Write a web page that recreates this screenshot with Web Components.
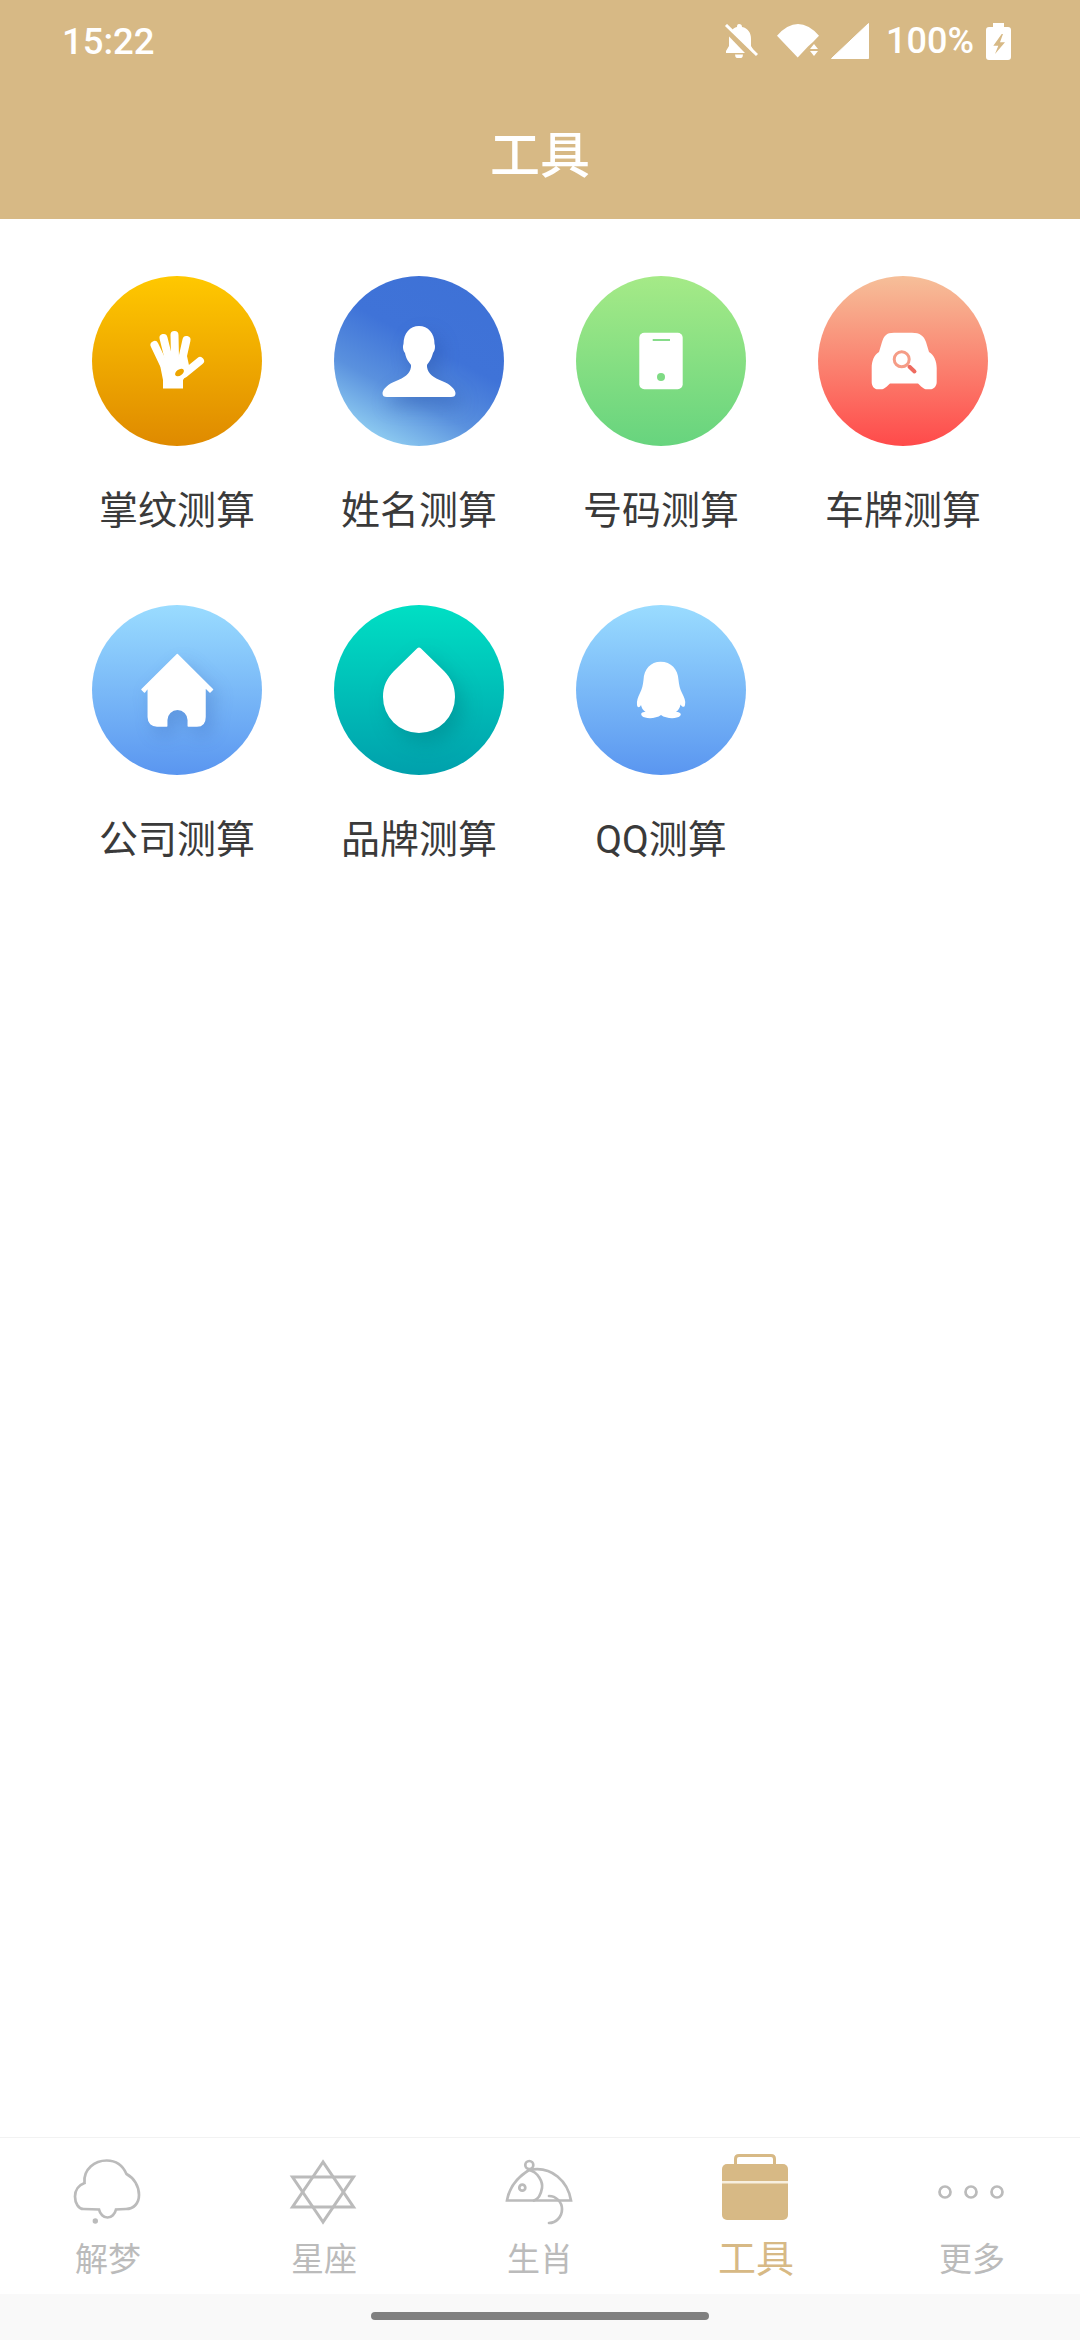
<!DOCTYPE html>
<html lang="zh">
<head>
<meta charset="utf-8">
<title>工具</title>
<style>
  html, body { margin: 0; padding: 0; background: #fff; }
  body { width: 1080px; height: 2340px; display: flex; flex-direction: column; overflow: hidden; }
</style>
</head>
<body>
<app-header title="工具"></app-header>

<tool-grid>
  <tool-item bg="linear-gradient(180deg,#ffc800,#df8a00)">
    <svg slot="icon" viewBox="0 0 170 170" width="170" height="170">
      <g stroke="#fff" stroke-width="8" stroke-linecap="round" fill="none">
        <path d="M62.5 69 71.5 88"/><path d="M71.5 62 77 84"/><path d="M82.5 59 83 82"/><path d="M94.5 64 90 84"/><path d="M108 85 92 98"/>
      </g>
      <path d="M67 84 95 80 98 94 91 104V112.500H71V104Z" fill="#fff"/>
      <ellipse cx="87.500" cy="96.500" rx="5" ry="3" transform="rotate(-35 87.500 96.500)" fill="#eda500"/>
    </svg>
    掌纹测算
  </tool-item>
  <tool-item bg="linear-gradient(208deg,#3e71d6 0%,#3f73d8 42%,#5a91de 66%,#92d0f2 90%)">
    <svg slot="icon" viewBox="0 0 170 170" width="170" height="170" style="filter:drop-shadow(6px 9px 9px rgba(30,70,150,.3))">
      <path fill="#fff" d="M85 50C94 50 100.500 57 100.500 68C101.500 70 101 75 99 77C97.500 83 95 86 93 89V91C94 98 100 102 108 105C116 108 121 113 121.500 117C121.500 120 120 121 117 121H53C50 121 48.500 120 48.500 117C49 113 54 108 62 105C70 102 76 98 77 91V89C75 86 72 83 71 77C69 75 68.500 70 69.500 68C69.500 57 76 50 85 50Z"/>
    </svg>
    姓名测算
  </tool-item>
  <tool-item bg="linear-gradient(180deg,#a5ea87,#67d47e)">
    <svg slot="icon" viewBox="0 0 170 170" width="170" height="170">
      <rect x="63.300" y="56.700" width="43.400" height="56.600" rx="5" fill="#fff"/>
      <rect x="76.700" y="63" width="17.300" height="2" fill="#86dc8a"/>
      <circle cx="85" cy="101" r="4" fill="#7fdb84"/>
    </svg>
    号码测算
  </tool-item>
  <tool-item bg="linear-gradient(180deg,#f6bf99,#ff4a4a)">
    <svg slot="icon" viewBox="0 0 170 170" width="170" height="170">
      <path fill="#fff" d="M76 56.700H94C102 56.700 106 60 108 66L111 76C116 79 118.700 85 118.700 92V106C118.700 110 116 113.300 112 113.300H109C105 113.300 103 110 100 107.500H72C69 110 67 113.300 63 113.300H60C56 113.300 53.700 110 53.700 106V92C53.700 85 56 79 61 76L64 66C66 60 68 56.700 76 56.700Z"/>
      <circle cx="83.700" cy="83.300" r="7.500" fill="none" stroke="#f59c86" stroke-width="3"/>
      <path d="M91.500 90.800 96.500 95.500" stroke="#ee6b60" stroke-width="4" stroke-linecap="round"/>
    </svg>
    车牌测算
  </tool-item>
  <tool-item bg="linear-gradient(180deg,#9adcff,#5a96f0)">
    <svg slot="icon" viewBox="0 0 170 170" width="170" height="170" style="filter:drop-shadow(6px 8px 9px rgba(30,70,150,.22))">
      <path fill="#fff" stroke="#fff" stroke-width="1.500" stroke-linejoin="round" d="M85.300 49.500 120.500 84.500 118 87 113 82V112C113 118 110 121 105 121H96.300V115A10.800 10.800 0 0 0 74.700 115V121H65C60 121 56.300 118 56.300 112V82L52.500 87 50 84.500Z"/>
    </svg>
    公司测算
  </tool-item>
  <tool-item bg="linear-gradient(180deg,#00dfc4,#00a0ac)">
    <svg slot="icon" viewBox="0 0 170 170" width="170" height="170" style="filter:drop-shadow(7px 9px 10px rgba(0,80,90,.25))">
      <path fill="#fff" d="M83 43.500Q85 41.500 87 43.500L110 66C117 73 121 81 121 92A36 36 0 0 1 49 92C49 81 53 73 60 66Z"/>
    </svg>
    品牌测算
  </tool-item>
  <tool-item bg="linear-gradient(180deg,#9adcff,#5a96f0)">
    <svg slot="icon" viewBox="0 0 170 170" width="170" height="170">
      <path fill="#fff" d="M84.700 56.700C95 56.700 102 64 102.500 75C103 80 104 84 106 88C108 92 110 96 109 100C108.500 103 106 102 104.500 99.500C104 103 102 105.500 100 107C104 107 106 109 104 111C101 114 90 114 85 110C80 114 69 114 66 111C64 108 66 107 69.500 107C67 105 65.500 103 65 100C63.500 103 61.500 103 61 100C60.500 96 62 92 64 88C66 84 67 80 67.500 75C68 64 74.500 56.700 84.700 56.700Z"/>
    </svg>
    QQ测算
  </tool-item>
</tool-grid>

<bottom-nav>
  <nav-item>
    <svg slot="icon" viewBox="0 0 80 72" width="80" height="72" fill="none" stroke="#bbb" stroke-width="2.700">
      <path d="M16.500 29C15 15 27 6.500 38.700 6.500C48 6.500 55 12 58.500 20C66 24 71 32 71 41C71 49 66 55 58 55L48 55.500C47 60 43.500 63.500 39.500 63.500C35.500 63.500 32 60 31 55.500L15.500 55C10.500 55 7 49 7 42.500C7 36 11 31 16.500 29Z"/>
      <circle cx="27.300" cy="67" r="2.700" fill="#bbb" stroke="none"/>
    </svg>
    解梦
  </nav-item>
  <nav-item>
    <svg slot="icon" viewBox="0 0 80 72" width="80" height="72" fill="none" stroke="#bbb" stroke-width="3">
      <path d="M39 8 8.500 53H69.500Z"/><path d="M39 68 8.500 23H69.500Z"/>
    </svg>
    星座
  </nav-item>
  <nav-item>
    <svg slot="icon" viewBox="0 0 80 72" width="80" height="72" fill="none" stroke="#bbb" stroke-width="2.700" stroke-linecap="round">
      <circle cx="29.300" cy="11" r="4"/>
      <path d="M7 46.500C9 34 18 23 29 16C52 11 68 28 71 46.500Z"/>
      <path d="M29 16C38 18 43 28 42 34C41 40 39 45 34 46.500"/>
      <circle cx="22.300" cy="33.700" r="3"/>
      <path d="M49 42C56 42 62 48 62 55C62 63 56 69 49 69"/>
    </svg>
    生肖
  </nav-item>
  <nav-item active>
    <svg slot="icon" viewBox="0 0 80 72" width="80" height="72">
      <path d="M19.500 11V5C19.500 2.500 21 1.500 23 1.500H55C57 1.500 58.500 2.500 58.500 5V11" fill="none" stroke="#d7b985" stroke-width="3"/>
      <rect x="6" y="10" width="66" height="56" rx="5" fill="#d7b985"/>
      <rect x="6" y="27" width="66" height="2.500" fill="#f7efdf"/>
    </svg>
    工具
  </nav-item>
  <nav-item>
    <svg slot="icon" viewBox="0 0 80 72" width="80" height="72" fill="none" stroke="#bbb" stroke-width="2.700">
      <circle cx="13" cy="38" r="5.500"/><circle cx="39" cy="38" r="5.500"/><circle cx="65" cy="38" r="5.500"/>
    </svg>
    更多
  </nav-item>
</bottom-nav>

<gesture-bar></gesture-bar>

<script>
const CJK = '"Noto Sans CJK SC", sans-serif';

class StatusBar extends HTMLElement {
  connectedCallback() {
    this.attachShadow({ mode: 'open' });
    this.shadowRoot.innerHTML = `
      <style>
        :host { display: flex; align-items: center; height: 82px; padding: 0 69px 0 62px; color: #fff; font: 500 36.500px Roboto, sans-serif; }
        .time { flex: 1; }
        .icons { display: flex; align-items: center; }
        svg { display: block; }
        .pct { margin: 0 12px 0 17px; font-size: 36px; }
      </style>
      <span class="time">15:22</span>
      <div class="icons">
        <svg width="34" height="34" viewBox="0 0 34 34" style="margin-right:19px">
          <path fill="#fff" d="M15 0C17 0 18 1 18 3C24 4 27 9 27 15V22L30 27V29H2V27L5 22V15C5 9 8 4 13 3C13 1 13.500 0 15 0Z"/>
          <path d="M11 30.500A4 4 0 0 0 19 30.500Z" fill="#fff"/>
          <path d="M-1 2 29 33" stroke="#d7b985" stroke-width="6"/>
          <path d="M2 1 33 31" stroke="#fff" stroke-width="3"/>
        </svg>
        <svg width="43" height="34" viewBox="0 0 43 34" style="margin-right:11px">
          <path fill="#fff" d="M0 11.700Q21-11.500 42 11.700L36 18 31 22.500 20.700 33.500Z"/>
          <path fill="#fff" d="M37 20 41 25H33ZM33 27H41L37 32Z"/>
        </svg>
        <svg width="38" height="36" viewBox="0 0 38 36"><path fill="#fff" stroke="#fff" stroke-linejoin="round" d="M37.500.5V35.500H.5Z"/></svg>
        <span class="pct">100%</span>
        <svg width="25" height="37" viewBox="0 0 25 37">
          <path fill="#fff" d="M7 0H18V4H22C24 4 25 5 25 7V34C25 36 24 37 22 37H3C1 37 0 36 0 34V7C0 5 1 4 3 4H7Z"/>
          <path fill="#d7b985" d="M15.700 11 7.300 22.700H12.300L9 31 19 19.300H14L17 11Z"/>
        </svg>
      </div>`;
  }
}

class AppHeader extends HTMLElement {
  connectedCallback() {
    this.attachShadow({ mode: 'open' });
    this.shadowRoot.innerHTML = `
      <style>
        :host { display: block; height: 219px; background: #d7b985; flex: none; }
        h1 { margin: 0; height: 137px; display: flex; align-items: center; justify-content: center; color: #fff; font: 500 50px ${CJK}; }
      </style>
      <status-bar></status-bar>
      <h1>${this.getAttribute('title')}</h1>`;
  }
}

class ToolGrid extends HTMLElement {
  connectedCallback() {
    this.attachShadow({ mode: 'open' });
    this.shadowRoot.innerHTML = `
      <style>
        :host { display: grid; flex: 1; grid-template-columns: repeat(4, 242px); grid-auto-rows: 259px; row-gap: 70px; align-content: start; padding: 57px 56px 0; background: #fff; }
      </style>
      <slot></slot>`;
  }
}

class ToolItem extends HTMLElement {
  connectedCallback() {
    this.attachShadow({ mode: 'open' });
    this.shadowRoot.innerHTML = `
      <style>
        :host { display: flex; flex-direction: column; align-items: center; color: #3a3a3a; font: 400 39px/48px Roboto, ${CJK}; }
        .disc { width: 170px; height: 170px; border-radius: 50%; margin-bottom: 41px; background: ${this.getAttribute('bg')}; }
        ::slotted(svg) { display: block; }
      </style>
      <div class="disc"><slot name="icon"></slot></div>
      <slot></slot>`;
  }
}

class BottomNav extends HTMLElement {
  connectedCallback() {
    this.attachShadow({ mode: 'open' });
    this.shadowRoot.innerHTML = `
      <style>
        :host { display: grid; flex: none; grid-template-columns: repeat(5, 1fr); height: 157px; box-sizing: border-box; border-top: 1px solid #f2f2f2; padding-top: 16px; background: #fff; }
      </style>
      <slot></slot>`;
  }
}

class NavItem extends HTMLElement {
  connectedCallback() {
    this.attachShadow({ mode: 'open' });
    this.shadowRoot.innerHTML = `
      <style>
        :host { display: flex; flex-direction: column; align-items: center; color: #bbb; font: 400 33px/40px ${CJK}; }
        :host([active]) { color: #d7b985; font-size: 38px; line-height: 38px; }
        ::slotted(svg) { display: block; margin-bottom: 11px; }
      </style>
      <slot name="icon"></slot>
      <slot></slot>`;
  }
}

class GestureBar extends HTMLElement {
  connectedCallback() {
    this.attachShadow({ mode: 'open' });
    this.shadowRoot.innerHTML = `
      <style>
        :host { display: flex; flex: none; justify-content: center; height: 46px; padding-top: 18px; box-sizing: border-box; background: #f9f9f9; }
        div { width: 338px; height: 8px; border-radius: 4px; background: #808080; }
      </style>
      <div></div>`;
  }
}

customElements.define('status-bar', StatusBar);
customElements.define('app-header', AppHeader);
customElements.define('tool-grid', ToolGrid);
customElements.define('tool-item', ToolItem);
customElements.define('bottom-nav', BottomNav);
customElements.define('nav-item', NavItem);
customElements.define('gesture-bar', GestureBar);
</script>
</body>
</html>
